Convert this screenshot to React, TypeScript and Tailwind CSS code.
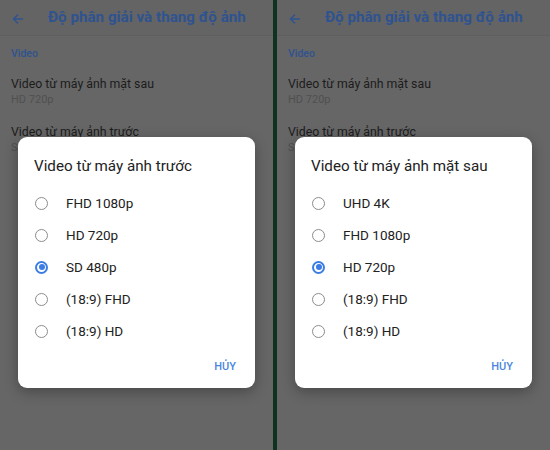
import React from "react";

interface ScreenProps {
  dialogTitle: string;
  options: string[];
  selected: number;
}

const font = { fontFamily: "Roboto, 'Noto Sans', sans-serif" };

const Radio = ({ checked }: { checked: boolean }) => {
  if (checked) {
    return (
      <span className="flex h-[13px] w-[13px] items-center justify-center rounded-full border-2 border-[#3b7de4]">
        <span className="h-[6px] w-[6px] rounded-full bg-[#3b7de4]" />
      </span>
    );
  }
  return <span className="h-[13px] w-[13px] rounded-full border-[1.5px] border-[#8c8c8c]" />;
};

const Screen = ({ dialogTitle, options, selected }: ScreenProps) => {
  return (
    <div className="relative h-full w-[273px] bg-[#666666]">
      {/* header */}
      <div className="flex h-[36px] items-center border-b border-[#5f5f5f] bg-[#646464] pl-[12px]">
        <svg width="12" height="12" viewBox="0 0 12 12" className="mt-[2px]">
          <path d="M11 6H1.5M6 1.5L1.5 6 6 10.5" stroke="#2f5390" strokeWidth="1.4" fill="none" />
        </svg>
        <h1 className="ml-[24px] text-[15.2px] font-bold text-[#2f5390]">Độ phân giải và thang độ ảnh</h1>
      </div>

      {/* settings list, dimmed under the dialog */}
      <div className="px-[11px]">
        <div className="mt-[10px] text-[10.5px] font-medium leading-[16px] text-[#2f5390]">Video</div>
        <div className="mt-[13px]">
          <div className="text-[12.3px] leading-[18px] text-[#1c1c1c]">Video từ máy ảnh mặt sau</div>
          <div className="text-[11px] leading-[14px] text-[#505050]">HD 720p</div>
        </div>
        <div className="mt-[16px]">
          <div className="text-[12.3px] leading-[18px] text-[#1c1c1c]">Video từ máy ảnh trước</div>
          <div className="text-[11px] leading-[14px] text-[#505050]">SD 480p</div>
        </div>
      </div>

      {/* dialog */}
      <div className="absolute left-[18px] top-[137px] w-[237px] rounded-[9px] bg-white pb-[14px] shadow-[0_4px_14px_rgba(0,0,0,0.3)]">
        <div className="mt-[19px] px-[16px] text-[15.2px] leading-[20px] text-[#222222]">{dialogTitle}</div>
        <div className="mt-[11px]">
          {options.map((opt, i) => (
            <div key={opt} className="flex h-[32px] items-center pl-[17px]">
              <Radio checked={i === selected} />
              <span className="ml-[18px] text-[13.5px] text-[#222222]">{opt}</span>
            </div>
          ))}
        </div>
        <div className="mt-[13px] flex justify-end pr-[19px]">
          <span className="text-[11px] font-medium leading-[14px] text-[#4a86e0]">HỦY</span>
        </div>
      </div>
    </div>
  );
};

export default function App() {
  return (
    <div className="flex h-[450px] w-[550px] overflow-hidden" style={font}>
      <Screen
        dialogTitle="Video từ máy ảnh trước"
        options={["FHD 1080p", "HD 720p", "SD 480p", "(18:9) FHD", "(18:9) HD"]}
        selected={2}
      />
      <div className="h-full w-[4px] bg-[#0f3221]" />
      <Screen
        dialogTitle="Video từ máy ảnh mặt sau"
        options={["UHD 4K", "FHD 1080p", "HD 720p", "(18:9) FHD", "(18:9) HD"]}
        selected={2}
      />
    </div>
  );
}
